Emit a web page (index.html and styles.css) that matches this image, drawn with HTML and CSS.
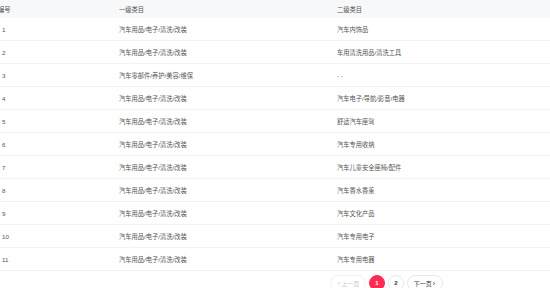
FILE: index.html
```html
<!DOCTYPE html>
<html lang="zh">
<head>
<meta charset="utf-8">
<link rel="stylesheet" href="styles.css">
</head>
<body>
<div class="page">
  <div class="table">
    <div class="row head">
      <div class="c1 hc1">编号</div>
      <div class="c2">一级类目</div>
      <div class="c3">二级类目</div>
    </div>
    <div class="row"><div class="c1">1</div><div class="c2">汽车用品/电子/清洗/改装</div><div class="c3">汽车内饰品</div></div>
    <div class="row"><div class="c1">2</div><div class="c2">汽车用品/电子/清洗/改装</div><div class="c3">车用清洗用品/清洗工具</div></div>
    <div class="row"><div class="c1">3</div><div class="c2">汽车零部件/养护/美容/维保</div><div class="c3">- -</div></div>
    <div class="row"><div class="c1">4</div><div class="c2">汽车用品/电子/清洗/改装</div><div class="c3">汽车电子/导航/影音/电器</div></div>
    <div class="row"><div class="c1">5</div><div class="c2">汽车用品/电子/清洗/改装</div><div class="c3">舒适汽车座驾</div></div>
    <div class="row"><div class="c1">6</div><div class="c2">汽车用品/电子/清洗/改装</div><div class="c3">汽车专用收纳</div></div>
    <div class="row"><div class="c1">7</div><div class="c2">汽车用品/电子/清洗/改装</div><div class="c3">汽车儿童安全座椅/配件</div></div>
    <div class="row"><div class="c1">8</div><div class="c2">汽车用品/电子/清洗/改装</div><div class="c3">汽车香水香薰</div></div>
    <div class="row"><div class="c1">9</div><div class="c2">汽车用品/电子/清洗/改装</div><div class="c3">汽车文化产品</div></div>
    <div class="row"><div class="c1">10</div><div class="c2">汽车用品/电子/清洗/改装</div><div class="c3">汽车专用电子</div></div>
    <div class="row"><div class="c1">11</div><div class="c2">汽车用品/电子/清洗/改装</div><div class="c3">汽车专用电器</div></div>
  </div>
  <div class="pager">
    <span class="btn pill disabled"><span class="arr">‹</span> 上一页</span>
    <span class="btn circle active">1</span>
    <span class="btn circle">2</span>
    <span class="btn pill">下一页 <span class="arr">›</span></span>
  </div>
</div>
</body>
</html>
```
FILE: styles.css
```css
html, body {
  margin: 0;
  padding: 0;
  background: #fff;
}
body {
  font-family: "Liberation Sans", "Noto Sans CJK SC", sans-serif;
  font-size: 6.25px;
  color: #555;
  width: 550px;
  height: 288px;
  overflow: hidden;
}
.page {
  display: flex;
  flex-direction: column;
}
.table {
  display: flex;
  flex-direction: column;
}
.row {
  display: grid;
  grid-template-columns: 117px 218px 1fr;
  height: 23px;
  align-items: center;
  border-bottom: 1px solid #f2f2f2;
  box-sizing: border-box;
  padding-left: 2px;
}
.row.head {
  height: 18px;
  background: #f7f8fa;
  border-bottom: none;
  color: #555;
}
.hc1 {
  margin-left: -4px;
}
.pager {
  display: flex;
  gap: 3px;
  margin-top: 4px;
  padding-left: 330px;
  align-items: center;
}
.btn {
  height: 16px;
  box-sizing: border-box;
  border: 1px solid #e8e8e8;
  border-radius: 8px;
  display: flex;
  align-items: center;
  justify-content: center;
  color: #333;
  font-size: 6px;
}
.pill {
  width: 36px;
}
.circle {
  width: 16px;
  font-weight: bold;
}
.active {
  background: #fe2c55;
  border-color: #fe2c55;
  color: #fff;
}
.disabled {
  color: #c8c8c8;
  border-color: #f0f0f0;
}
.arr {
  font-size: 7px;
  margin: 0 1px;
}
```
